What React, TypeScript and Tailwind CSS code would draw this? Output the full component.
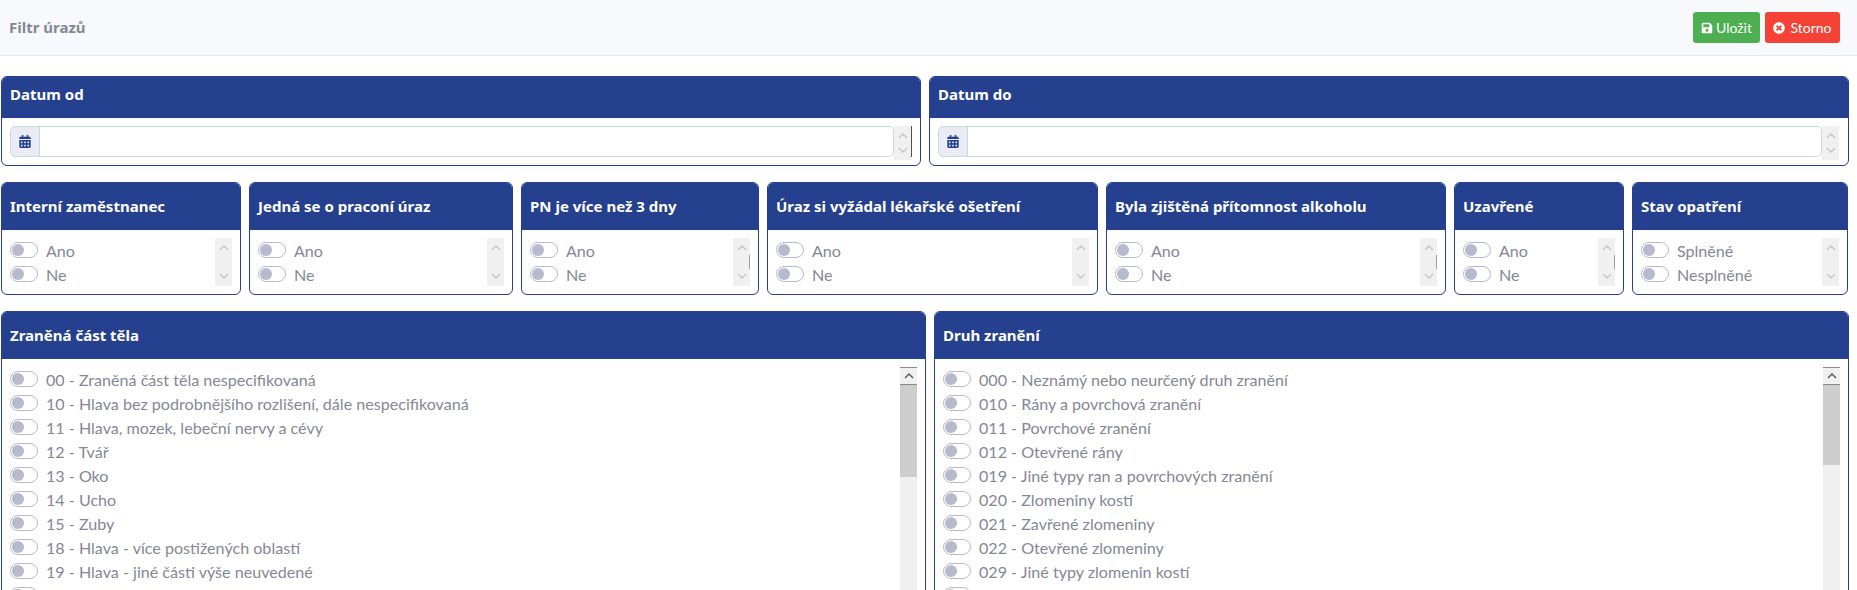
import { FaCalendarAlt, FaSave, FaTimesCircle } from 'react-icons/fa';

const FONT = "font-['Lato',sans-serif]";
const TITLE = "font-['Noto_Sans',sans-serif] text-[15px] font-bold";

// the tenth row only peeks in at the bottom edge, its label is below the fold
const BODY_PARTS = [
  '00 - Zraněná část těla nespecifikovaná',
  '10 - Hlava bez podrobnějšího rozlišení, dále nespecifikovaná',
  '11 - Hlava, mozek, lebeční nervy a cévy',
  '12 - Tvář',
  '13 - Oko',
  '14 - Ucho',
  '15 - Zuby',
  '18 - Hlava - více postižených oblastí',
  '19 - Hlava - jiné části výše neuvedené',
  '',
];

const INJURIES = [
  '000 - Neznámý nebo neurčený druh zranění',
  '010 - Rány a povrchová zranění',
  '011 - Povrchové zranění',
  '012 - Otevřené rány',
  '019 - Jiné typy ran a povrchových zranění',
  '020 - Zlomeniny kostí',
  '021 - Zavřené zlomeniny',
  '022 - Otevřené zlomeniny',
  '029 - Jiné typy zlomenin kostí',
  '',
];

const FLAGS = [
  { title: 'Interní zaměstnanec', width: 'w-[240px]', options: ['Ano', 'Ne'] },
  { title: 'Jedná se o praconí úraz', width: 'w-[264px]', options: ['Ano', 'Ne'] },
  { title: 'PN je více než 3 dny', width: 'w-[238px]', options: ['Ano', 'Ne'], mark: true },
  { title: 'Úraz si vyžádal lékařské ošetření', width: 'w-[331px]', options: ['Ano', 'Ne'] },
  { title: 'Byla zjištěná přítomnost alkoholu', width: 'w-[340px]', options: ['Ano', 'Ne'], mark: true },
  { title: 'Uzavřené', width: 'w-[170px]', options: ['Ano', 'Ne'], mark: true },
  { title: 'Stav opatření', width: 'w-[216px]', options: ['Splněné', 'Nesplněné'] },
];

const Chevron = ({ up, dark }: { up?: boolean; dark?: boolean }) => (
  <svg width="10" height="6" viewBox="0 0 10 6" fill="none" className={dark ? 'text-[#505050]' : 'text-[#c4c4c4]'}>
    <path d={up ? 'M1 5l4-4 4 4' : 'M1 1l4 4 4-4'} stroke="currentColor" strokeWidth="1.3" />
  </svg>
);

// disabled-looking scrollbar for the short boxes
const ShortScroll = ({ height, mark }: { height: string; mark?: boolean }) => (
  <div className={`relative flex w-[17px] shrink-0 flex-col items-center justify-between bg-[#f0f0f0] py-[7px] ${height}`}>
    <Chevron up />
    {mark && <div className="absolute right-0 top-[17px] h-[14px] w-px bg-[#a0a0a0]" />}
    <Chevron />
  </div>
);

const LongScroll = ({ thumb }: { thumb: string }) => (
  <div className="flex w-[17px] shrink-0 flex-col self-stretch bg-[#f0f0f0]">
    <div className="flex h-[18px] shrink-0 items-center justify-center border-y border-[#8a8a8a] bg-[#f0f0f0]">
      <Chevron up dark />
    </div>
    <div className={`bg-[#cdcdcd] ${thumb}`} />
  </div>
);

const Toggle = ({ label }: { label: string }) => (
  <div className="flex h-6 items-start">
    <span className="mt-[3px] flex h-4 w-7 shrink-0 items-center rounded-full border border-[#b7b9cc] bg-white pl-[1px]">
      <span className="h-3 w-3 rounded-full bg-[#b7b9cc]" />
    </span>
    <span className="ml-2 text-[16.1px] leading-6 text-[#858796]">{label}</span>
  </div>
);

const Card = ({ title, headH, className, children }: { title: string; headH: string; className: string; children: React.ReactNode }) => (
  <section className={`overflow-hidden rounded-[6px] border border-[#25408f] bg-white ${className}`}>
    <h3 className={`flex items-center bg-[#25408f] px-2 text-white ${TITLE} ${headH}`}>{title}</h3>
    {children}
  </section>
);

const DateCard = ({ title, mark }: { title: string; mark?: boolean }) => (
  <Card title={title} headH="h-[41px] pb-[7px]" className="h-[90px] flex-1">
    <div className={`flex items-start pl-2 pt-2 ${mark ? 'pr-2' : 'pr-[9px]'}`}>
      <div className="flex h-[31px] w-[30px] shrink-0 items-center justify-center rounded-l-[5px] border border-[#d1d3e2] bg-[#eaecf4]">
        <FaCalendarAlt className="h-[13px] w-[12px] text-[#25408f]" />
      </div>
      <div className="h-[31px] flex-1 rounded-r-[5px] border border-l-0 border-[#d1d3e2] bg-white" />
      <ShortScroll height="h-[34px]" />
      {mark && <div className="h-[31px] w-px shrink-0 bg-[#505050]" />}
    </div>
  </Card>
);

const ListCard = ({ title, items, thumb, className }: { title: string; items: string[]; thumb: string; className: string }) => (
  <Card title={title} headH="h-[47px]" className={`h-[290px] rounded-b-none ${className}`}>
    <div className="flex h-full items-start pl-2 pr-[8px] pt-2">
      <div className="flex-1 pt-[1px]">
        {items.map((item, i) => (
          <Toggle key={i} label={item} />
        ))}
      </div>
      <LongScroll thumb={thumb} />
    </div>
  </Card>
);

export default function App() {
  return (
    <div className={`h-[590px] w-[1857px] overflow-hidden bg-white ${FONT}`}>
      <header className="flex h-[56px] items-center justify-between border-b border-[#e3e6f0] bg-[#f8f9fc] pl-[9px] pr-[17px]">
        <h1 className={`text-[#858796] ${TITLE}`}>Filtr úrazů</h1>
        <div className="flex gap-[5px]">
          <button type="button" className="flex h-[31px] w-[67px] items-center justify-center gap-[3px] rounded-[3px] bg-[#4caf50] text-[14px] text-white">
            <FaSave className="h-3 w-3" />
            Uložit
          </button>
          <button type="button" className="flex h-[31px] w-[75px] items-center justify-center gap-[5px] rounded-[3px] bg-[#f44336] text-[14px] text-white">
            <FaTimesCircle className="h-3 w-3" />
            Storno
          </button>
        </div>
      </header>

      <div className="flex flex-col gap-4 pl-px pr-[8px] pt-5">
        <div className="flex gap-2">
          <DateCard title="Datum od" mark />
          <DateCard title="Datum do" />
        </div>

        <div className="flex gap-2">
          {FLAGS.map((f) => (
            <Card key={f.title} title={f.title} headH="h-[47px]" className={`h-[113px] ${f.width}`}>
              <div className="flex items-start pl-2 pr-2 pt-2">
                <div className="flex-1 pt-[1px]">
                  {f.options.map((o) => (
                    <Toggle key={o} label={o} />
                  ))}
                </div>
                <ShortScroll height="h-[48px]" mark={f.mark} />
              </div>
            </Card>
          ))}
        </div>

        <div className="flex gap-2">
          <ListCard title="Zraněná část těla" items={BODY_PARTS} thumb="h-[92px]" className="w-[925px]" />
          <ListCard title="Druh zranění" items={INJURIES} thumb="h-[80px]" className="w-[915px]" />
        </div>
      </div>
    </div>
  );
}
